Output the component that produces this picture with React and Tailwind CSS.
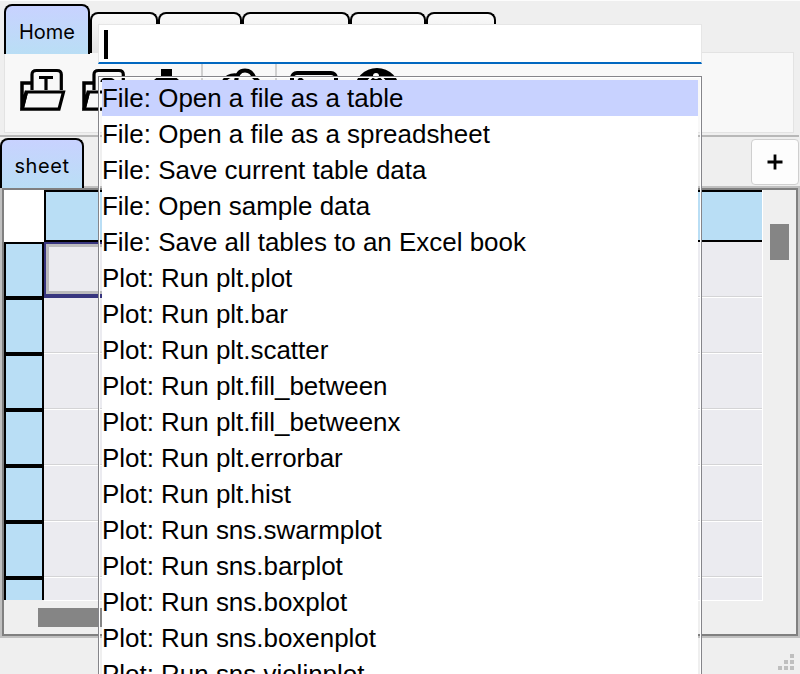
const commands = [
  "File: Open a file as a table",
  "File: Open a file as a spreadsheet",
  "File: Save current table data",
  "File: Open sample data",
  "File: Save all tables to an Excel book",
  "Plot: Run plt.plot",
  "Plot: Run plt.bar",
  "Plot: Run plt.scatter",
  "Plot: Run plt.fill_between",
  "Plot: Run plt.fill_betweenx",
  "Plot: Run plt.errorbar",
  "Plot: Run plt.hist",
  "Plot: Run sns.swarmplot",
  "Plot: Run sns.barplot",
  "Plot: Run sns.boxplot",
  "Plot: Run sns.boxenplot",
  "Plot: Run sns.violinplot",
];

const tabWidths = ["w-[68px]", "w-[84px]", "w-[108px]", "w-[76px]", "w-[70px]"];
const rows = [0, 1, 2, 3, 4, 5, 6];

function FolderIcon({ children }) {
  return (
    <svg className="block h-[46px] w-[48px] shrink-0" viewBox="0 0 48 46" fill="none" stroke="black">
      <path d="M11 15H2V41.500L6.500 23" strokeWidth="3.500" />
      <path d="M12 22V6.500Q12 2.500 16.500 2.500H37Q41.300 2.500 41.300 6.500V22" strokeWidth="3.200" />
      <path d="M6.500 24H43.500L39 41.200H2Z" strokeWidth="3.200" />
      {children}
    </svg>
  );
}

function RibbonTabs() {
  return (
    <div className="flex h-[52px] items-start border-t border-[#fcfcfc] pl-1">
      <div className="relative z-10 mt-[3px] flex h-[50px] w-[86px] shrink-0 items-center justify-center rounded-t-[8px] border-2 border-b-0 border-black bg-linear-to-b from-[#c8d2ff] to-[#b9def5] pt-[4px] text-[20px]">
        Home
      </div>
      {tabWidths.map((w, i) => (
        <div key={i} className={`mt-[11px] h-[41px] shrink-0 rounded-t-[8px] border-2 border-b-0 border-black bg-linear-to-b from-[#fafafa] to-[#e4e4e4] ${w}`} />
      ))}
    </div>
  );
}

function Toolbar() {
  return (
    <div className="ml-1 flex h-[81px] w-[790px] items-start border border-[#e3e3e3] bg-[#f8f8f8] pt-[15px] pl-[15px]">
      <FolderIcon>
        <path d="M19 9.500H33M26 9V22" strokeWidth="3.200" />
      </FolderIcon>
      <div className="ml-[14px] flex">
        <FolderIcon>
          <path d="M32 14Q31 11 25.500 11Q20 11 20 14" strokeWidth="3.200" />
        </FolderIcon>
      </div>
      <svg className="ml-[20px] block h-[40px] w-[34px] shrink-0" viewBox="0 0 34 40">
        <path d="M11 1H22V9.500H26L29 12V40H4V12L7 9.500H11Z" />
      </svg>
      <div className="-mt-[4px] ml-[17px] h-[60px] w-[2px] shrink-0 bg-[#d0d0d0]" />
      <svg className="ml-[17px] block h-[40px] w-[44px] shrink-0" viewBox="0 0 44 40" fill="none" stroke="black" strokeWidth="4">
        <path d="M16 14Q17 2.500 25 2.500Q32 2.500 34 10" />
        <path d="M4 13Q8 6.500 17 7.500M34 9L39 14" />
      </svg>
      <div className="-mt-[4px] ml-[11px] h-[60px] w-[2px] shrink-0 bg-[#d0d0d0]" />
      <svg className="ml-[13px] block h-[40px] w-[50px] shrink-0" viewBox="0 0 50 40" fill="none" stroke="black" strokeWidth="4">
        <rect x="2" y="5" width="44" height="33" rx="5" />
        <path d="M9 10L14 15" />
      </svg>
      <svg className="ml-[15px] block h-[46px] w-[46px] shrink-0" viewBox="0 0 46 46">
        <circle cx="22" cy="23" r="23" />
        <circle cx="21" cy="8" r="3" fill="white" />
        <path d="M12 14L17 9M26 9L31 14" fill="none" stroke="white" strokeWidth="2" />
      </svg>
    </div>
  );
}

function Sheet() {
  return (
    <div className="h-[452px] border-2 border-[#c0c0c0]">
      <div className="flex h-full flex-col border-2 border-[#808080]">
        <div className="flex h-[411px] shrink-0">
          <div className="flex h-[410px] w-[40px] shrink-0 flex-col overflow-hidden">
            <div className="h-[52px] shrink-0 bg-white" />
            {rows.map((r) => (
              <div key={r} className="h-[56px] shrink-0 border-2 border-black bg-[#b9def5]" />
            ))}
          </div>
          <div className="flex h-[411px] w-[719px] shrink-0 flex-col overflow-hidden border-r border-b border-white bg-[#ebebf0]">
            <div className="h-[52px] shrink-0 border-2 border-r-0 border-black bg-[#b9def5]" />
            <div className="flex h-[56px] shrink-0">
              <div className="w-[200px] border-2 border-b-4 border-[#37357f]">
                <div className="h-full border-[3px] border-[#bbbbbd]" />
              </div>
              <div className="flex flex-1 flex-col justify-end">
                <div className="h-px bg-[#d4d4d6]" />
                <div className="h-px bg-white" />
              </div>
            </div>
            {rows.slice(1).map((r) => (
              <div key={r} className="flex h-[56px] shrink-0 flex-col justify-end">
                <div className="h-px bg-[#d4d4d6]" />
                <div className="h-px bg-white" />
              </div>
            ))}
          </div>
          <div className="ml-[7px] flex w-[19px] flex-col pt-[34px]">
            <div className="h-[36px] bg-[#858585]" />
          </div>
        </div>
        <div className="flex h-[33px] pt-[7px] pl-[34px]">
          <div className="h-[19px] w-[400px] bg-[#858585]" />
        </div>
      </div>
    </div>
  );
}

function SizeGrip() {
  return (
    <div className="mt-[16px] mr-[6px] flex flex-col items-end gap-[2px]">
      {[1, 2, 3].map((n) => (
        <div key={n} className="flex gap-[2px]">
          {Array.from({ length: n }, (_, i) => (
            <div key={i} className="size-1 bg-[#bfbfbf]" />
          ))}
        </div>
      ))}
    </div>
  );
}

function CommandPalette() {
  return (
    <div className="absolute top-[24px] left-[98px] z-20 w-[604px]">
      <div className="flex h-[40px] items-start border border-b-2 border-[#e6e6e6] border-b-[#0067c0] bg-white pt-[5px] pl-[5px]">
        <div className="h-[29px] w-[4px] bg-black" />
      </div>
      <div className="h-[12px]" />
      <div className="h-[598px] border border-b-0 border-[#85858a]">
        <div className="h-full border border-b-0 border-white px-[2px] pt-[2px]">
          <ul className="h-full overflow-hidden bg-white font-['Liberation_Sans',Arial,sans-serif] text-[25.95px]">
            {commands.map((c, i) => (
              <li key={c} className={`h-[36px] leading-[36px] whitespace-nowrap ${i === 0 ? "bg-[#c8d2ff]" : ""}`}>
                {c}
              </li>
            ))}
          </ul>
        </div>
      </div>
    </div>
  );
}

export default function App() {
  return (
    <div className="relative h-[674px] w-[800px] overflow-hidden bg-[#efefef] font-['Inter',sans-serif] leading-none text-black">
      <RibbonTabs />
      <Toolbar />
      <div className="mt-[2px] h-[2px] w-[799px] bg-[#b8b8b8]" />
      <div className="flex h-[49px] justify-between">
        <div className="mt-px flex h-[50px] w-[84px] shrink-0 items-center justify-center rounded-t-[8px] border-2 border-b-0 border-black bg-linear-to-b from-[#c8d2ff] to-[#b9def5] pt-[4px] text-[20px] tracking-[0.6px]">
          sheet
        </div>
        <div className="mt-[2px] mr-px flex h-[46px] w-[48px] items-center justify-center rounded-[4px] border border-[#cfcfcf] bg-[#fdfdfd]">
          <svg className="block size-[16px]" viewBox="0 0 16 16">
            <path d="M8 0.500V15.500M0.500 8H15.500" stroke="black" strokeWidth="2.800" />
          </svg>
        </div>
      </div>
      <Sheet />
      <div className="flex justify-end">
        <SizeGrip />
      </div>
      <CommandPalette />
    </div>
  );
}
